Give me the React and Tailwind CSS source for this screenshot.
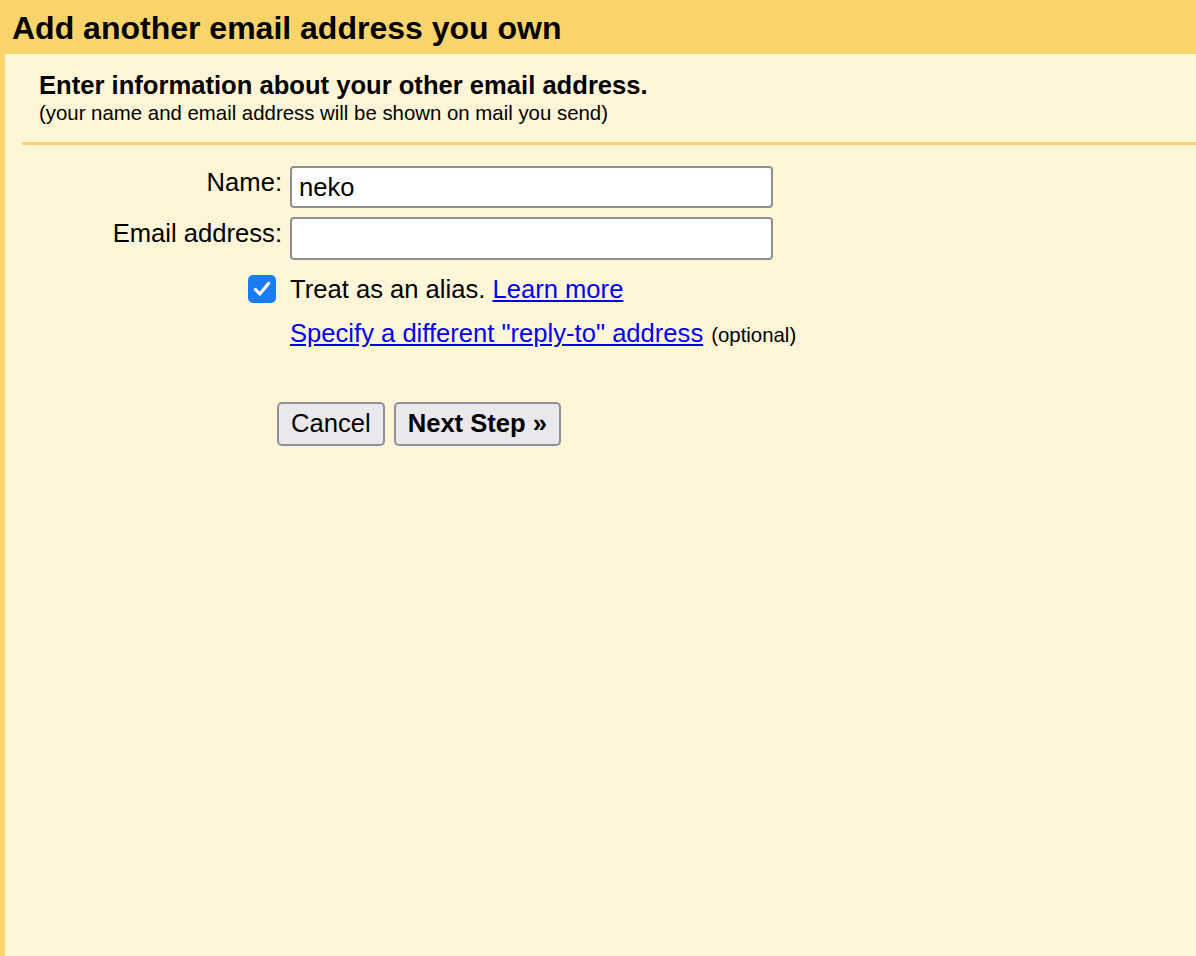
import React from 'react';

function App() {
  return (
    <div className="min-h-[956px] w-full bg-[#fef6d7] text-black" style={{ fontFamily: '"Liberation Sans", Arial, sans-serif' }}>
      {/* Title bar */}
      <div className="h-[54px] bg-[#f9d46b] pl-[12px] pt-[9px]">
        <h1 className="text-[32px] font-bold leading-[38px]">Add another email address you own</h1>
      </div>

      <div className="min-h-[902px] border-l-[5px] border-[#f9d46b]">
        {/* Section header */}
        <div className="pl-[34px] pt-[16px] pb-[17px]">
          <h2 className="text-[25.6px] font-bold leading-[30px]">Enter information about your other email address.</h2>
          <p className="pt-[1px] text-[20.4px] leading-[24px]">(your name and email address will be shown on mail you send)</p>
        </div>
        <div className="ml-[17px] h-[3px] bg-[#f9d46b]"></div>

        {/* Form */}
        <div className="pt-[21px]">
          <div className="flex">
            <label className="w-[285px] pr-[8px] pt-[1px] text-right text-[25.6px] leading-[30px]">Name:</label>
            <input
              defaultValue="neko"
              className="h-[42px] w-[483px] rounded-[4px] border-2 border-[#8f8f8f] bg-white px-[7px] text-[25.6px] outline-none"
            />
          </div>
          <div className="mt-[9px] flex">
            <label className="w-[285px] pr-[8px] pt-[1px] text-right text-[25.6px] leading-[30px]">Email address:</label>
            <input className="h-[43px] w-[483px] rounded-[4px] border-2 border-[#8f8f8f] bg-white px-[7px] text-[25.6px] outline-none" />
          </div>

          <div className="mt-[14px] flex items-center">
            <div className="flex w-[285px] justify-end pr-[14px]">
              <span className="flex h-[28px] w-[28px] shrink-0 items-center justify-center rounded-[5px] bg-[#1a7cf5]">
                <svg className="h-[24px] w-[24px] shrink-0" viewBox="0 0 24 24" fill="none">
                  <path d="M5.5 12.5l4.3 4.5L18.5 6.5" stroke="white" strokeWidth="3.2" strokeLinecap="round" strokeLinejoin="round" />
                </svg>
              </span>
            </div>
            <span className="text-[25.6px] leading-[30px]">
              Treat as an alias. <a href="#" className="text-[#0000ee] underline">Learn more</a>
            </span>
          </div>

          <div className="mt-[14px] pl-[285px] leading-[30px]">
            <a href="#" className="text-[25.6px] text-[#0000ee] underline">Specify a different "reply-to" address</a>
            <span className="ml-[8px] text-[20.4px]">(optional)</span>
          </div>

          <div className="mt-[50px] flex gap-[9px] pl-[272px]">
            <button className="h-[44px] rounded-[5px] border-2 border-[#8f8f9d] bg-[#e9e9ed] px-[12px] text-[25.6px] leading-none">Cancel</button>
            <button className="h-[44px] rounded-[5px] border-2 border-[#8f8f9d] bg-[#e9e9ed] px-[12px] text-[25.6px] font-bold leading-none">Next Step »</button>
          </div>
        </div>
      </div>
    </div>
  );
}

export default App;
